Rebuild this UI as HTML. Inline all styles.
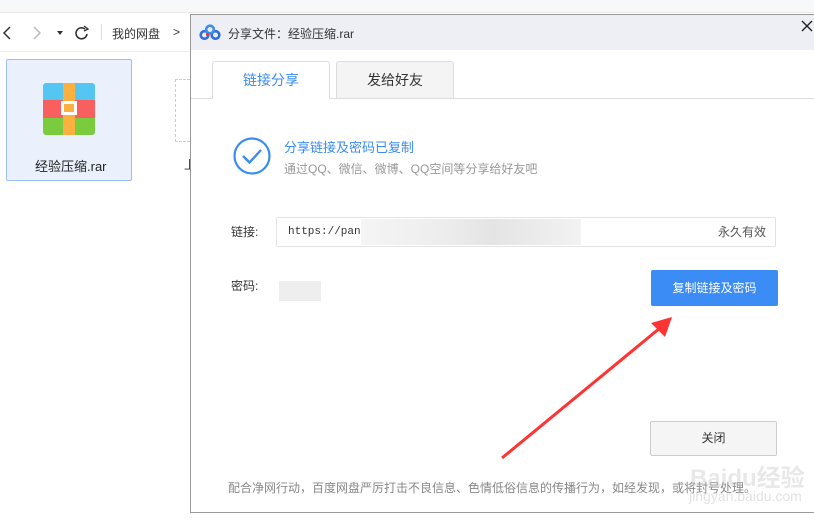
<!DOCTYPE html>
<html><head><meta charset="utf-8"><style>
*{margin:0;padding:0;box-sizing:border-box}
body{width:814px;height:528px;overflow:hidden;background:#fff;font-family:"Liberation Sans","Noto Sans CJK SC",sans-serif;position:relative}
.a{position:absolute;white-space:nowrap}
</style></head><body>
<div class="a" style="left:0;top:0;width:814px;height:13px;background:#f7f8fa;border-bottom:1px solid #e8e8e8"></div>
<div class="a" style="left:0;top:51px;width:190px;height:1px;background:#eee"></div>
<svg class="a" style="left:0;top:24px" width="100" height="18"><path d="M10 3 L4 9 L10 15" fill="none" stroke="#333" stroke-width="1.5"/><path d="M34 3 L40 9 L34 15" fill="none" stroke="#bbb" stroke-width="1.5"/><path d="M57 7 L63 7 L60 11 Z" fill="#333"/><path d="M85 5 A5.5 5.5 0 1 0 87 10" fill="none" stroke="#333" stroke-width="1.6"/><path d="M84 2 L88 5 L84 7" fill="none" stroke="#333" stroke-width="1.4"/></svg>
<div class="a" style="left:101px;top:24px;width:1px;height:16px;background:#ddd"></div>
<div class="a" style="left:112px;top:25px;font-size:12px;color:#333">我的网盘</div>
<div class="a" style="left:173px;top:25px;font-size:12px;color:#333">&gt;</div>
<div class="a" style="left:6px;top:59px;width:126px;height:122px;background:#eaf1fd;border:1px solid #9cc0f2;border-radius:2px"></div>
<div class="a" style="left:43px;top:83px;width:52px;height:52px;border-radius:3px;overflow:hidden">
<div style="height:17px;background:#55c5f2"></div><div style="height:18px;background:#f95f5f"></div><div style="height:17px;background:#7acb3e"></div>
<div class="a" style="left:20px;top:0;width:12px;height:52px;background:#fbb040"></div>
<div class="a" style="left:18px;top:18px;width:16px;height:14px;border:3px solid #fff;background:#fbb040"></div></div>
<div class="a" style="left:35px;top:156px;font-size:13px;color:#222">经验压缩.rar</div>
<div class="a" style="left:175px;top:79px;width:15px;height:63px;border:1px dashed #ccc;border-right:none"></div>
<div class="a" style="left:184px;top:156px;font-size:12px;color:#333">上</div>

<div class="a" style="left:190px;top:14px;width:630px;height:499px;border-left:1px solid #999;border-top:1px solid #999;border-bottom:1px solid #999;background:#fff">
<div class="a" style="left:0;top:0;width:630px;height:35px;background:#eeeff4"></div>
<svg class="a" style="left:8px;top:9px" width="22" height="17" viewBox="0 0 22 17"><circle cx="5.5" cy="11" r="3.8" fill="none" stroke="#2e6fe0" stroke-width="2.6"/><circle cx="16.5" cy="11" r="3.8" fill="none" stroke="#2e6fe0" stroke-width="2.6"/><circle cx="11" cy="5.5" r="3.8" fill="none" stroke="#3d8cf0" stroke-width="2.6"/><circle cx="8.5" cy="10.5" r="1.6" fill="#e33"/></svg>
<div class="a" style="left:37px;top:10px;font-size:12px;color:#333">分享文件：经验压缩.rar</div>
<svg class="a" style="left:610px;top:5px" width="12" height="12"><path d="M1 1 L11 11 M11 1 L1 11" stroke="#222" stroke-width="1.4"/></svg>
<div class="a" style="left:0;top:83px;width:630px;height:1px;background:#ddd"></div>
<div class="a" style="left:21px;top:46px;width:118px;height:38px;border:1px solid #ddd;border-bottom:none;background:#fff;border-radius:3px 3px 0 0;text-align:center;line-height:36px;font-size:14px;color:#3b8cf0">链接分享</div>
<div class="a" style="left:145px;top:46px;width:118px;height:37px;border:1px solid #ddd;border-bottom:none;background:#f4f4f4;border-radius:3px 3px 0 0;text-align:center;line-height:36px;font-size:14px;color:#333">发给好友</div>
<svg class="a" style="left:41px;top:121px" width="40" height="40"><circle cx="20" cy="20" r="17.5" fill="none" stroke="#3b8cf0" stroke-width="2.2"/><path d="M11 20 L17.5 26.5 L29 14" fill="none" stroke="#3b8cf0" stroke-width="2.4"/></svg>
<div class="a" style="left:93px;top:122px;font-size:13px;color:#3b8cf0">分享链接及密码已复制</div>
<div class="a" style="left:93px;top:145px;font-size:12px;color:#999">通过QQ、微信、微博、QQ空间等分享给好友吧</div>
<div class="a" style="left:40px;top:208px;font-size:12px;color:#333">链接:</div>
<div class="a" style="left:85px;top:202px;width:500px;height:30px;border:1px solid #e3e3e3;border-radius:2px"></div>
<div class="a" style="left:97px;top:211px;font-family:'Liberation Mono',monospace;font-size:11px;color:#333">https://pan.</div>
<div class="a" style="left:170px;top:204px;width:220px;height:26px;background:linear-gradient(90deg,#f5f5f5,#ececec 40%,#e4e4e4 60%,#f2f2f2)"></div>
<div class="a" style="left:527px;top:208px;font-size:12px;color:#555">永久有效</div>
<div class="a" style="left:40px;top:262px;font-size:12px;color:#333">密码:</div>
<div class="a" style="left:88px;top:266px;width:42px;height:20px;background:#eee"></div>
<div class="a" style="left:460px;top:255px;width:127px;height:36px;background:#3b8cf5;border-radius:2px;color:#fff;font-size:12px;text-align:center;line-height:36px">复制链接及密码</div>
<div class="a" style="left:459px;top:406px;width:127px;height:35px;background:#f5f5f5;border:1px solid #ccc;border-radius:2px;color:#333;font-size:12px;text-align:center;line-height:33px">关闭</div>
<div class="a" style="left:37px;top:464px;font-size:12px;color:#888">配合净网行动，百度网盘严厉打击不良信息、色情低俗信息的传播行为，如经发现，或将封号处理。</div>
</div>
<svg class="a" style="left:0;top:0" width="814" height="528"><path d="M502 458 L660 328" stroke="#f33" stroke-width="3"/><path d="M672 317 L651 323 L665 337 Z" fill="#f33"/></svg>
<div class="a" style="left:690px;top:458px;font-size:24px;font-weight:bold;color:rgba(190,190,190,.35)">Baidu经验</div>
<div class="a" style="left:689px;top:488px;font-size:14px;color:rgba(190,190,190,.45)">jingyan.baidu.com</div>
</body></html>
